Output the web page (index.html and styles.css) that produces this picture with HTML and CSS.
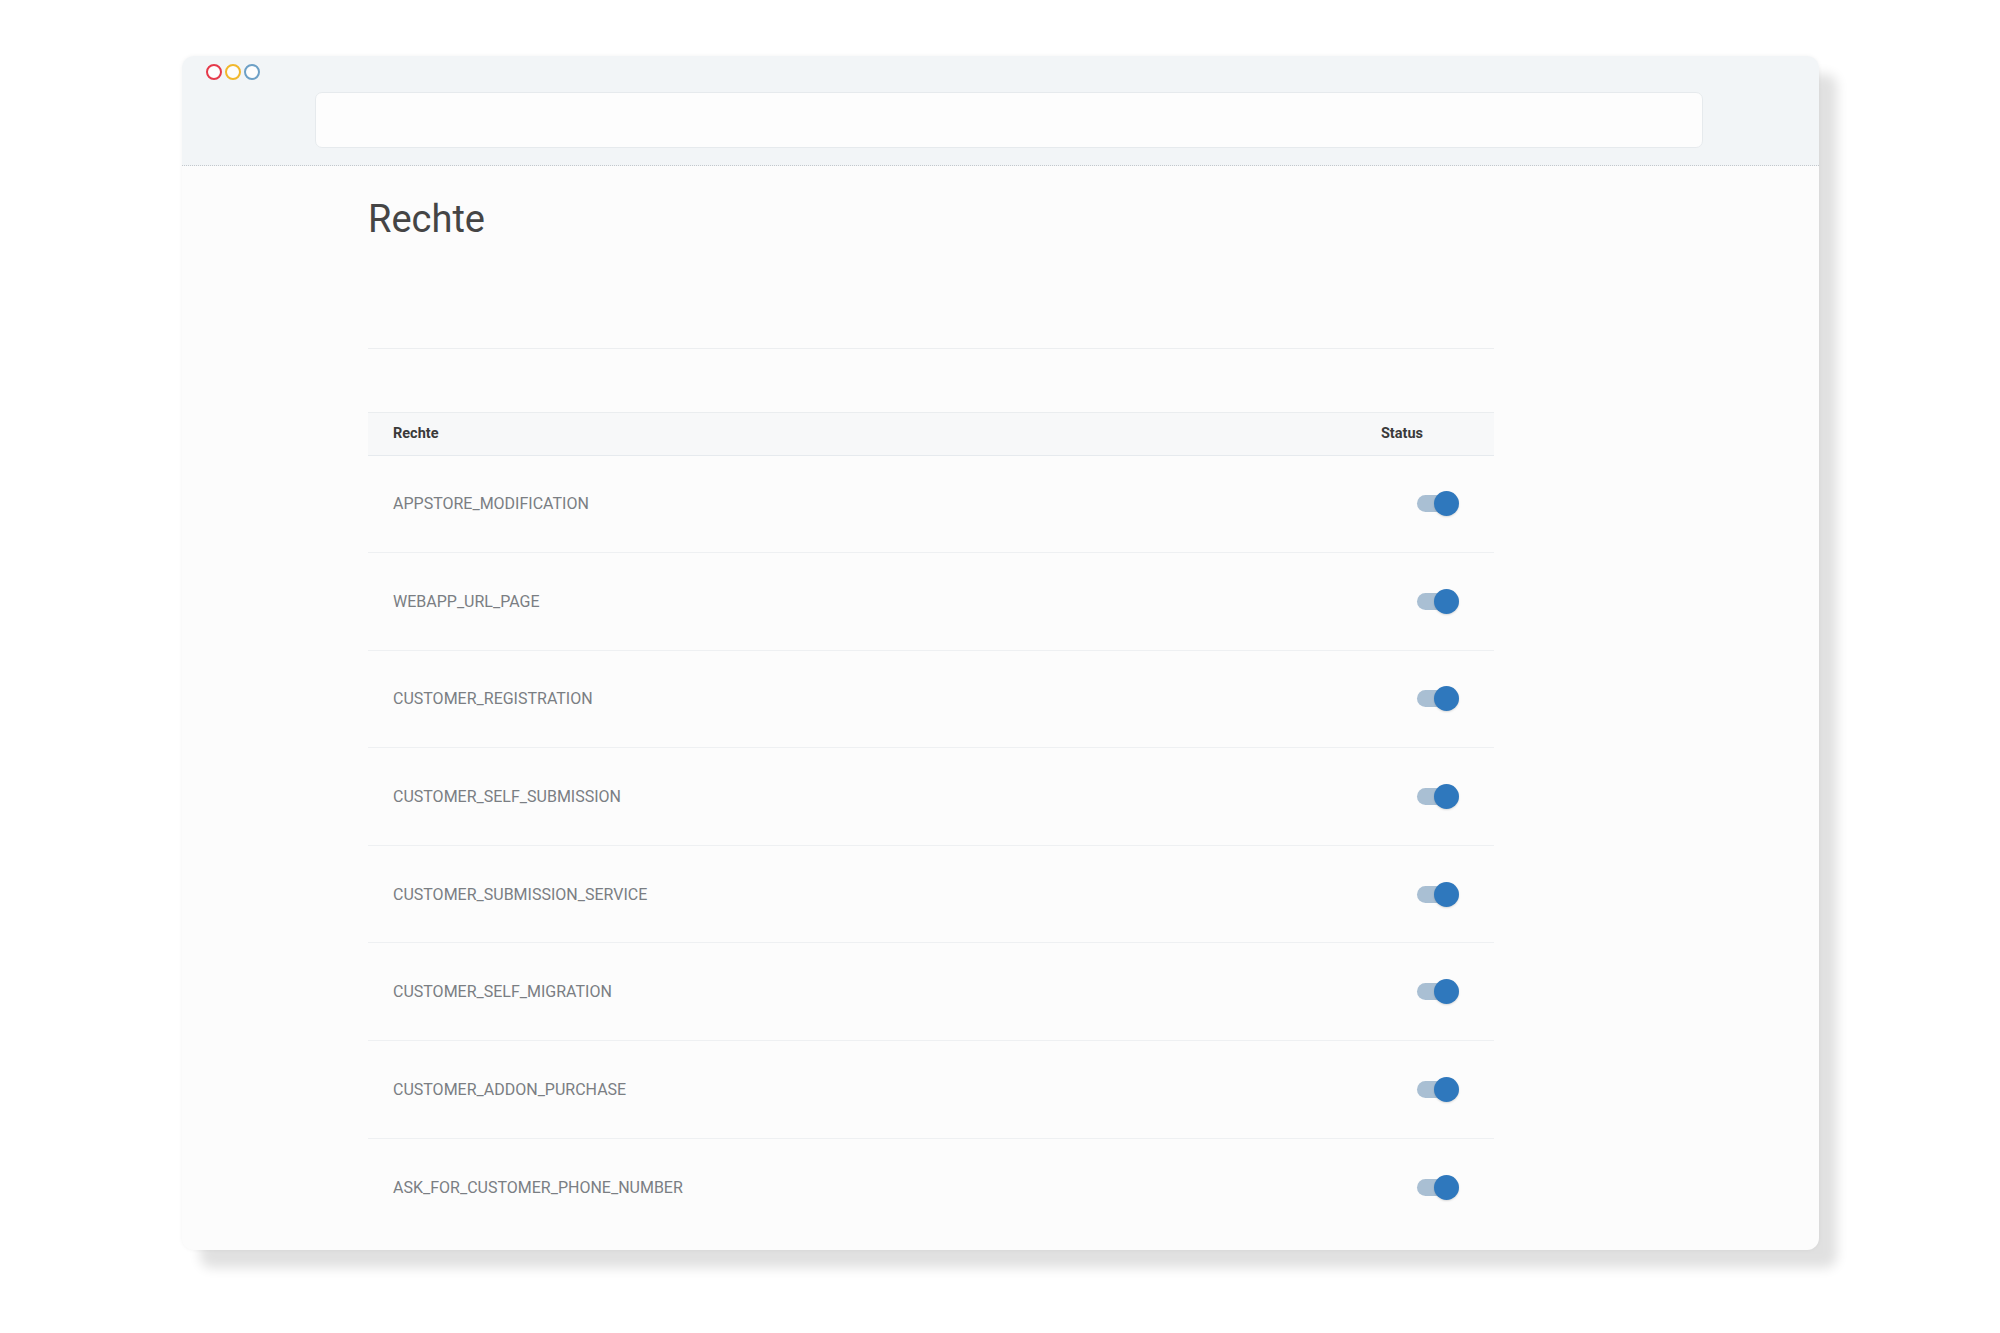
FILE: index.html
```html
<!DOCTYPE html>
<html lang="de">
  <head>
    <meta name="viewport" content="width=device-width, initial-scale=1.0" />
    <title>Rechte</title>
    <link rel="stylesheet" href="styles.css">
  </head>
  <body>
    <div class="window">
      <div class="window-bar">
        <div class="dots">
          <span class="dot red"></span>
          <span class="dot yellow"></span>
          <span class="dot blue"></span>
        </div>
        <div class="address"></div>
      </div>
      <div class="content">
        <h1 class="title">Rechte</h1>
        <hr class="divider">
        <div class="rights">
          <div class="row head">
            <span class="name">Rechte</span>
            <span class="status">Status</span>
          </div>
          <div class="row">
            <span class="name">APPSTORE_MODIFICATION</span>
            <span class="toggle on"></span>
          </div>
          <div class="row">
            <span class="name">WEBAPP_URL_PAGE</span>
            <span class="toggle on"></span>
          </div>
          <div class="row">
            <span class="name">CUSTOMER_REGISTRATION</span>
            <span class="toggle on"></span>
          </div>
          <div class="row">
            <span class="name">CUSTOMER_SELF_SUBMISSION</span>
            <span class="toggle on"></span>
          </div>
          <div class="row">
            <span class="name">CUSTOMER_SUBMISSION_SERVICE</span>
            <span class="toggle on"></span>
          </div>
          <div class="row">
            <span class="name">CUSTOMER_SELF_MIGRATION</span>
            <span class="toggle on"></span>
          </div>
          <div class="row">
            <span class="name">CUSTOMER_ADDON_PURCHASE</span>
            <span class="toggle on"></span>
          </div>
          <div class="row">
            <span class="name">ASK_FOR_CUSTOMER_PHONE_NUMBER</span>
            <span class="toggle on"></span>
          </div>
        </div>
      </div>
    </div>
  </body>
</html>
```

FILE: styles.css
```css
* {
  margin: 0;
  padding: 0;
  box-sizing: border-box;
  font-family: Roboto, "Liberation Sans", sans-serif;
}
html {
  background-color: #ffffff;
}
body {
  padding: 56px 0 83px 182px;
}
.window {
  width: 1637px;
  height: 1194px;
  background-color: #fcfcfc;
  border-radius: 12px;
  box-shadow: 18px 18px 12px rgba(0, 0, 0, 0.12), 0 0 4px rgba(0, 0, 0, 0.05);
  overflow: hidden;
}
.window-bar {
  height: 110px;
  background-color: #f2f5f7;
  border-bottom: 1px dotted #c3c8cd;
  position: relative;
}
.dots {
  position: absolute;
  top: 8px;
  left: 24px;
  display: flex;
  gap: 3px;
}
.dot {
  width: 16px;
  height: 16px;
  border-radius: 50%;
  border: 2.5px solid;
  background-color: #fdfdfd;
}
.red {
  border-color: #e53a4b;
}
.yellow {
  border-color: #f1b82d;
}
.blue {
  border-color: #6da0c6;
}
.address {
  position: absolute;
  top: 36px;
  left: 133px;
  width: 1388px;
  height: 56px;
  background-color: #fdfdfd;
  border: 1px solid #e6eaed;
  border-radius: 7px;
}
.content {
  padding: 30px 0 0 186px;
  width: 1312px;
}
.title {
  font-size: 38px;
  line-height: 46px;
  font-weight: 400;
  color: #454545;
}
.divider {
  border: none;
  border-top: 1px solid #eceef0;
  margin-top: 106px;
}
.rights {
  margin-top: 63px;
}
.row {
  display: flex;
  align-items: center;
  justify-content: space-between;
  height: 97.6px;
  padding: 0 35px 0 25px;
  border-bottom: 1px solid #eef0f2;
}
.row:last-child {
  border-bottom: none;
}
.row.head {
  height: 43.5px;
  background-color: #f7f8f9;
  border-top: 1px solid #eaedef;
  border-bottom: 1px solid #e6eaee;
  padding-right: 71px;
}
.head .name,
.head .status {
  font-size: 14.5px;
  font-weight: 700;
  color: #3a3a3a;
}
.name {
  font-size: 16px;
  color: #7a7e83;
}
.toggle {
  position: relative;
  width: 42px;
  height: 25px;
}
.toggle:before {
  content: "";
  position: absolute;
  left: 0;
  top: 4px;
  width: 34px;
  height: 17px;
  border-radius: 9px;
  background-color: #a9bfd3;
}
.toggle.on:after {
  content: "";
  position: absolute;
  right: 0;
  top: 0;
  width: 25px;
  height: 25px;
  border-radius: 50%;
  background-color: #2f78bd;
  box-shadow: 0 1px 2px rgba(0, 0, 0, 0.15);
}
```
